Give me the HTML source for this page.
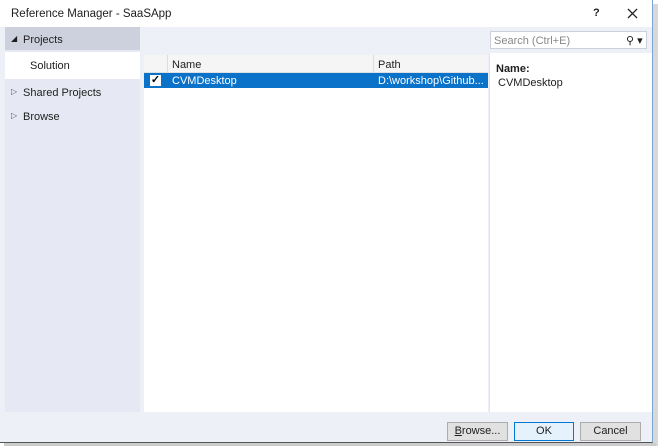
<!DOCTYPE html>
<html><head><style>
body{margin:0;width:660px;height:447px;background:#fff;font-family:"Liberation Sans",sans-serif;font-size:11px;color:#1e1e1e;position:relative;overflow:hidden}
.a{position:absolute}
</style></head><body>
<div class="a" style="left:0;top:0;width:652px;height:442px;background:#eef0f7;border-right:1px solid #7aa7d6;border-bottom:1px solid #555"></div>
<div class="a" style="left:653px;top:4px;width:5px;height:442px;background:#d8d8d8"></div>
<div class="a" style="left:4px;top:443px;width:652px;height:3px;background:#ccc"></div>
<div class="a" style="left:0;top:0;width:652px;height:27px;background:#fff"></div>
<div class="a" style="left:11px;top:8px;font-size:11.5px">Reference Manager - SaaSApp</div>
<div class="a" style="left:593px;top:7px;font-size:11px;font-weight:bold">?</div>
<svg class="a" style="left:627px;top:8px" width="11" height="11"><path d="M1 1L10 10M10 1L1 10" stroke="#222" stroke-width="1.3"/></svg>
<div class="a" style="left:5px;top:27px;width:135px;height:385px;background:#e6e9f3"></div>
<div class="a" style="left:5px;top:27px;width:135px;height:23px;background:#cdd1dd"></div>
<div class="a" style="left:11px;top:34px;font-size:8px">◢</div>
<div class="a" style="left:23px;top:34px">Projects</div>
<div class="a" style="left:5px;top:52px;width:135px;height:27px;background:#fff"></div>
<div class="a" style="left:30px;top:60px">Solution</div>
<div class="a" style="left:11px;top:87px;font-size:8px;color:#555">▷</div>
<div class="a" style="left:23px;top:87px">Shared Projects</div>
<div class="a" style="left:11px;top:111px;font-size:8px;color:#555">▷</div>
<div class="a" style="left:23px;top:111px">Browse</div>
<div class="a" style="left:490px;top:31px;width:157px;height:18px;background:#fff;border:1px solid #ccd0da;box-sizing:border-box"></div>
<div class="a" style="left:494px;top:35px;color:#888">Search (Ctrl+E)</div>
<div class="a" style="left:626px;top:34px;font-size:11px">⚲ ▾</div>
<div class="a" style="left:144px;top:55px;width:344px;height:357px;background:#fff"></div>
<div class="a" style="left:144px;top:55px;width:344px;height:17px;background:#f5f5f5;border-bottom:1px solid #e0e0e0"></div>
<div class="a" style="left:167px;top:55px;width:1px;height:17px;background:#ddd"></div>
<div class="a" style="left:373px;top:55px;width:1px;height:17px;background:#ddd"></div>
<div class="a" style="left:172px;top:59px">Name</div>
<div class="a" style="left:378px;top:59px">Path</div>
<div class="a" style="left:144px;top:73px;width:344px;height:15px;background:#0a72c9"></div>
<div class="a" style="left:150px;top:75px;width:11px;height:11px;background:#fff;font-size:11px;line-height:11px;text-align:center;color:#000;font-weight:bold">✓</div>
<div class="a" style="left:172px;top:75px;color:#fff">CVMDesktop</div>
<div class="a" style="left:378px;top:75px;color:#fff">D:\workshop\Github...</div>
<div class="a" style="left:489px;top:53px;width:162px;height:359px;background:#fff;border-left:1px solid #e4e4e4"></div>
<div class="a" style="left:496px;top:63px;font-weight:bold">Name:</div>
<div class="a" style="left:498px;top:77px">CVMDesktop</div>
<div class="a" style="left:447px;top:422px;width:61px;height:19px;background:#e1e1e1;border:1px solid #adadad;box-sizing:border-box;text-align:center;line-height:17px"><u>B</u>rowse...</div>
<div class="a" style="left:514px;top:422px;width:60px;height:19px;background:#e5f1fb;border:1px solid #0078d7;box-sizing:border-box;text-align:center;line-height:17px">OK</div>
<div class="a" style="left:580px;top:422px;width:61px;height:19px;background:#e1e1e1;border:1px solid #adadad;box-sizing:border-box;text-align:center;line-height:17px">Cancel</div>
</body></html>
